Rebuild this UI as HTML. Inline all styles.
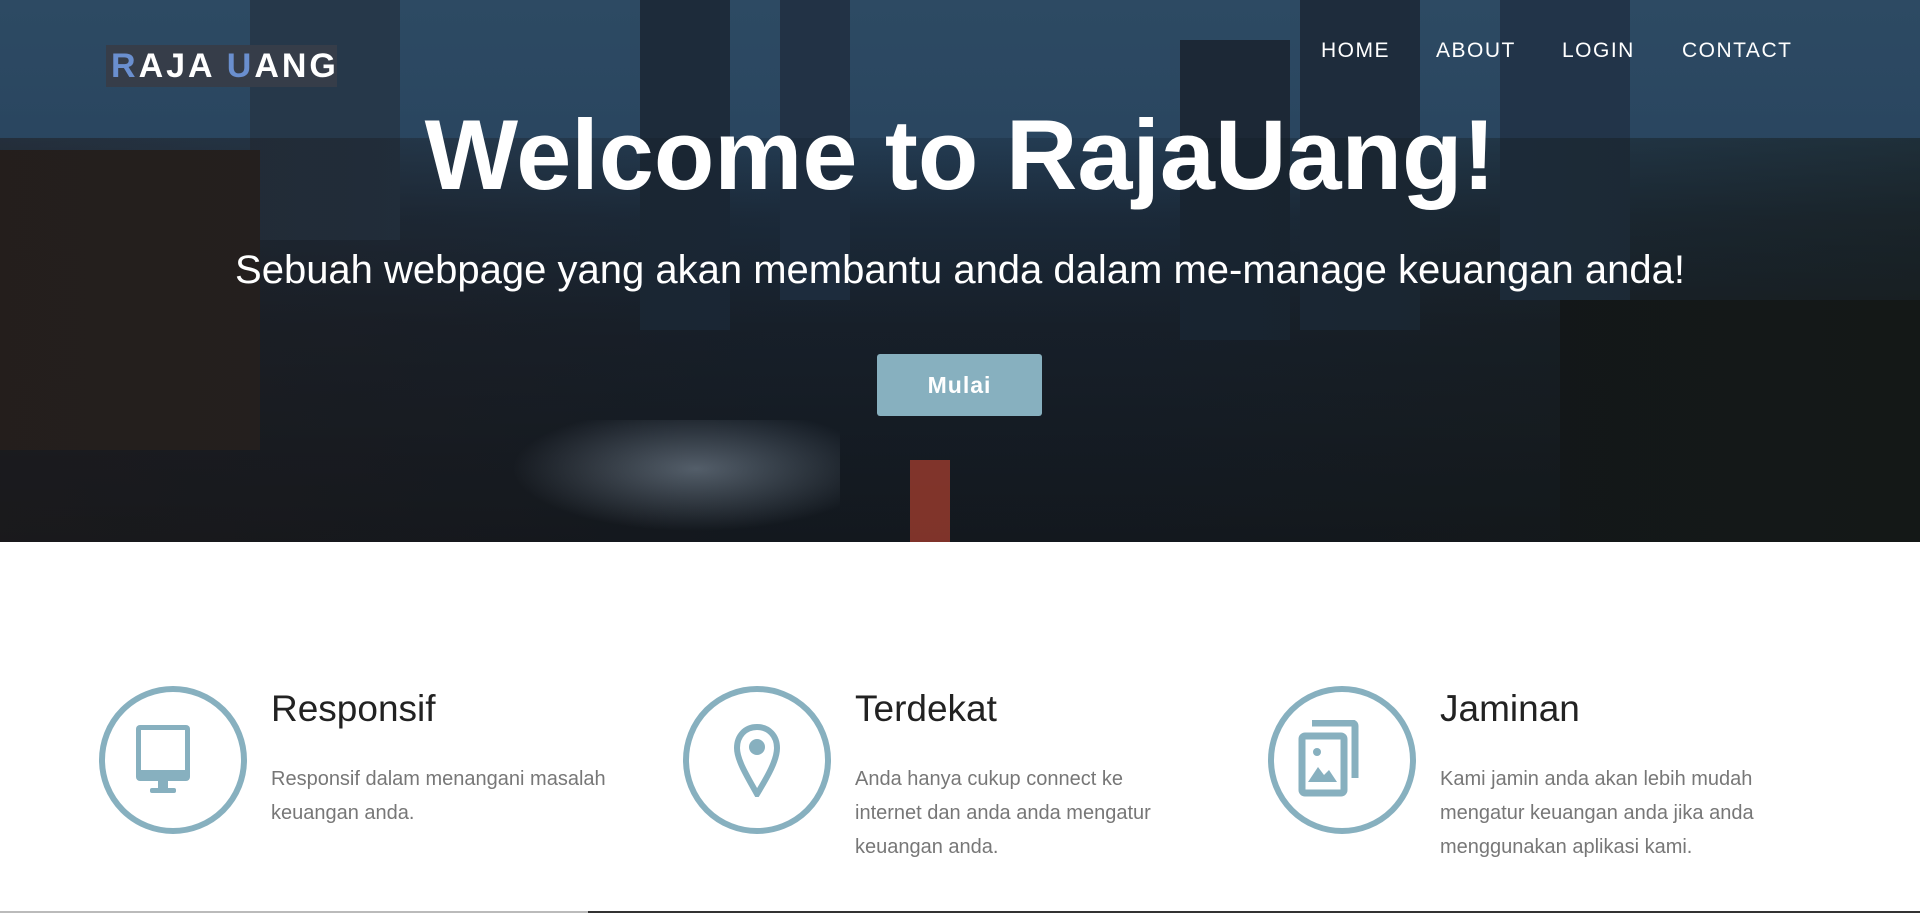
<!DOCTYPE html>
<html><head><meta charset="utf-8"><style>
*{margin:0;padding:0;box-sizing:border-box}
body{width:1920px;height:913px;overflow:hidden;background:#fff;font-family:"Liberation Sans",sans-serif;position:relative}
.hero{position:absolute;left:0;top:0;width:1920px;height:542px;overflow:hidden;
background:linear-gradient(180deg,#2d4a63 0%,#2a4660 25%,#1f2f40 40%,#1a222c 60%,#15191e 100%)}
.band{position:absolute;left:0;top:138px;width:1920px;height:404px;background:linear-gradient(90deg,rgba(30,25,25,.5),rgba(10,20,30,.2) 40%,rgba(10,20,30,.2) 60%,rgba(20,25,20,.5))}
.bld{position:absolute;background:#1b2633}
.logo{position:absolute;left:106px;top:45px;width:231px;height:42px;background:#363d49;color:#fff;font-weight:bold;font-size:34px;letter-spacing:3px;line-height:42px;padding-left:5px;white-space:nowrap;overflow:hidden;font-family:"Liberation Sans Narrow","Liberation Sans",sans-serif}
.logo b{color:#6a8fcf}
.nav{position:absolute;top:39px;color:#fff;font-size:21px;letter-spacing:1.5px}
h1{position:absolute;left:0;width:1920px;top:98px;text-align:center;color:#fff;font-size:99px;font-weight:bold;white-space:nowrap}
.sub{position:absolute;left:0;width:1920px;top:248px;text-align:center;color:#fff;font-size:40px;white-space:nowrap}
.btn{position:absolute;left:877px;top:354px;width:165px;height:62px;background:#87b0bf;color:#fff;font-weight:bold;font-size:23px;letter-spacing:1px;text-align:center;line-height:62px;border-radius:3px}
.circ{position:absolute;width:148px;height:148px;border:6px solid #87b0bf;border-radius:50%}
.h{position:absolute;font-size:37px;color:#222;font-weight:300;white-space:nowrap}
.p{position:absolute;font-size:20px;line-height:34px;color:#777;width:345px}
</style></head><body>
<div class="hero">
<div class="bld" style="left:250px;top:0;width:150px;height:240px;background:#26384a"></div>
<div class="bld" style="left:640px;top:0;width:90px;height:330px;background:#1d2b3a"></div>
<div class="bld" style="left:780px;top:0;width:70px;height:300px;background:#223245"></div>
<div class="bld" style="left:1180px;top:40px;width:110px;height:300px;background:#1c2836"></div>
<div class="bld" style="left:1300px;top:0;width:120px;height:330px;background:#1e2c3c"></div>
<div class="bld" style="left:1500px;top:0;width:130px;height:300px;background:#223449"></div>
<div class="bld" style="left:0;top:150px;width:260px;height:300px;background:#2a2420"></div>
<div class="bld" style="left:1560px;top:300px;width:360px;height:242px;background:#14171a"></div>
<div class="band"></div>
<div style="position:absolute;left:480px;top:420px;width:360px;height:122px;background:radial-gradient(ellipse at 60% 40%,rgba(200,220,240,.35),transparent 60%)"></div>
<div style="position:absolute;left:910px;top:460px;width:40px;height:82px;background:rgba(200,70,50,.6)"></div>
</div>
<div class="logo"><b>R</b>AJA <b>U</b>ANG</div>
<div class="nav" style="left:1321px">HOME</div>
<div class="nav" style="left:1436px">ABOUT</div>
<div class="nav" style="left:1562px">LOGIN</div>
<div class="nav" style="left:1682px">CONTACT</div>
<h1>Welcome to RajaUang!</h1>
<div class="sub">Sebuah webpage yang akan membantu anda dalam me-manage keuangan anda!</div>
<div class="btn">Mulai</div>

<div class="circ" style="left:99px;top:686px"></div>
<svg style="position:absolute;left:120px;top:720px" width="106" height="80" viewBox="0 0 106 80"><rect x="16" y="5" width="54" height="56" rx="4" fill="#87b0bf"/><rect x="21" y="10" width="44" height="40" fill="#fff"/><rect x="38" y="60" width="10" height="10" fill="#87b0bf"/><rect x="30" y="68" width="26" height="5" rx="2" fill="#87b0bf"/></svg>
<div class="h" style="left:271px;top:688px">Responsif</div>
<div class="p" style="left:271px;top:762px">Responsif dalam menangani masalah keuangan anda.</div>

<div class="circ" style="left:683px;top:686px"></div>
<svg style="position:absolute;left:730px;top:723px" width="54" height="74" viewBox="0 0 54 74"><path d="M27 4C15 4 7 13 7 25c0 12 10 28 20 46C38 53 47 37 47 25 47 13 39 4 27 4z" fill="none" stroke="#87b0bf" stroke-width="6"/><circle cx="27" cy="24" r="8" fill="#87b0bf"/></svg>
<div class="h" style="left:855px;top:688px">Terdekat</div>
<div class="p" style="left:855px;top:762px;width:330px">Anda hanya cukup connect ke internet dan anda anda mengatur keuangan anda.</div>

<div class="circ" style="left:1268px;top:686px"></div>
<svg style="position:absolute;left:1290px;top:720px" width="100" height="80" viewBox="0 0 100 80"><path d="M22 3h40a3 3 0 0 1 3 3v52" fill="none" stroke="#87b0bf" stroke-width="7"/><rect x="12" y="16" width="42" height="57" rx="3" fill="none" stroke="#87b0bf" stroke-width="7"/><circle cx="27" cy="32" r="4" fill="#87b0bf"/><path d="M18 62l10-15 6 8 5-5 8 12z" fill="#87b0bf"/></svg>
<div class="h" style="left:1440px;top:688px">Jaminan</div>
<div class="p" style="left:1440px;top:762px;width:340px">Kami jamin anda akan lebih mudah mengatur keuangan anda jika anda menggunakan aplikasi kami.</div>

<div style="position:absolute;left:0;top:911px;width:588px;height:2px;background:#bbb"></div>
<div style="position:absolute;left:588px;top:911px;width:1332px;height:2px;background:#333"></div>
</body></html>
